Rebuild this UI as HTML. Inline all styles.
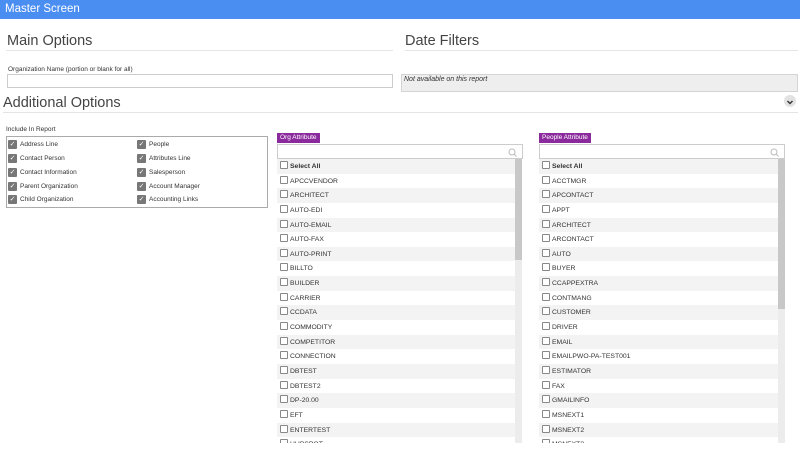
<!DOCTYPE html>
<html><head><style>
*{box-sizing:border-box;margin:0;padding:0}
body{width:800px;height:467px;background:#fff;font-family:"Liberation Sans",sans-serif;color:#333;position:relative;overflow:hidden}
.hdr{position:absolute;left:0;top:0;width:800px;height:19px;background:#4b8ef2;color:#fff;font-size:11.5px;line-height:19px;padding-left:5px}
.h{position:absolute;font-size:14.5px;color:#444}
.line{position:absolute;height:1px;background:#e4e4e4}
.lbl{position:absolute;font-size:6.5px;color:#333}
.inp{position:absolute;border:1px solid #ccc;background:#fff}
.box{position:absolute;left:6px;top:136px;width:262px;height:72px;border:1px solid #aaa}
.cb{position:absolute;font-size:6.5px;color:#333;line-height:9px}
.cb i{display:inline-block;width:9px;height:9px;background:#777;border-radius:1px;vertical-align:middle;margin-right:3px;color:#fff;font-style:normal;font-size:7px;line-height:9px;text-align:center}
.tag{position:absolute;background:#8b2a9c;color:#fff;font-size:6.5px;line-height:10px;height:10px;padding:0 3px}
.list{position:absolute;top:159px;height:284px;overflow:hidden}
.row{height:14.65px;font-size:6.8px;line-height:16px;padding-left:3px;color:#333}
.row:nth-child(odd){background:#f3f3f3}
.row b{display:inline-block;width:8px;height:8px;border:1px solid #888;border-radius:1px;vertical-align:-1px;margin-right:2px;background:#fff}
.sb{position:absolute;top:159px;width:7px;height:284px;background:#ececec}
.th{position:absolute;left:0;top:0;width:7px;background:#c8c8c8}
.srch{position:absolute}
</style></head><body>
<div class="hdr">Master Screen</div>
<div class="h" style="left:7px;top:33px">Main Options</div>
<div class="line" style="left:6px;top:50px;width:387px"></div>
<div class="h" style="left:405px;top:33px">Date Filters</div>
<div class="line" style="left:405px;top:50px;width:393px"></div>
<div class="lbl" style="left:8px;top:66px">Organization Name (portion or blank for all)</div>
<div class="inp" style="left:7px;top:74px;width:386px;height:14px"></div>
<div style="position:absolute;left:401px;top:74px;width:397px;height:18px;background:#eee;border:1px solid #d4d4d4;font-size:7px;font-style:italic;padding:1px 2px;color:#333">Not available on this report</div>
<div class="h" style="left:3px;top:95px">Additional Options</div>
<div style="position:absolute;left:784px;top:95px;width:12px;height:12px;border-radius:6px;background:#e2e2e2"><svg width="12" height="12"><path d="M3.5 5 L6 7.5 L8.5 5" stroke="#333" stroke-width="1.4" fill="none"/></svg></div>
<div class="line" style="left:3px;top:112px;width:795px"></div>
<div class="lbl" style="left:6px;top:126px">Include In Report</div>
<div class="box"></div>
<div class="cb" style="left:8px;top:140px"><i>✓</i>Address Line</div>
<div class="cb" style="left:8px;top:154px"><i>✓</i>Contact Person</div>
<div class="cb" style="left:8px;top:168px"><i>✓</i>Contact Information</div>
<div class="cb" style="left:8px;top:182px"><i>✓</i>Parent Organization</div>
<div class="cb" style="left:8px;top:195px"><i>✓</i>Child Organization</div>
<div class="cb" style="left:137px;top:140px"><i>✓</i>People</div>
<div class="cb" style="left:137px;top:154px"><i>✓</i>Attributes Line</div>
<div class="cb" style="left:137px;top:168px"><i>✓</i>Salesperson</div>
<div class="cb" style="left:137px;top:182px"><i>✓</i>Account Manager</div>
<div class="cb" style="left:137px;top:195px"><i>✓</i>Accounting Links</div>

<div class="tag" style="left:277px;top:133px">Org Attribute</div>
<div class="inp" style="left:277px;top:144px;width:246px;height:15px"></div>
<svg class="srch" style="left:508px;top:148px" width="9" height="9"><circle cx="4" cy="4" r="3" stroke="#bbb" fill="none"/><path d="M6 6 L8.5 8.5" stroke="#bbb"/></svg>
<div class="list" style="left:277px;width:238px">
<div class="row" style="font-weight:bold"><b></b>Select All</div>
<div class="row"><b></b>APCCVENDOR</div><div class="row"><b></b>ARCHITECT</div><div class="row"><b></b>AUTO-EDI</div><div class="row"><b></b>AUTO-EMAIL</div><div class="row"><b></b>AUTO-FAX</div><div class="row"><b></b>AUTO-PRINT</div><div class="row"><b></b>BILLTO</div><div class="row"><b></b>BUILDER</div><div class="row"><b></b>CARRIER</div><div class="row"><b></b>CCDATA</div><div class="row"><b></b>COMMODITY</div><div class="row"><b></b>COMPETITOR</div><div class="row"><b></b>CONNECTION</div><div class="row"><b></b>DBTEST</div><div class="row"><b></b>DBTEST2</div><div class="row"><b></b>DP-20.00</div><div class="row"><b></b>EFT</div><div class="row"><b></b>ENTERTEST</div><div class="row"><b></b>HUBSPOT</div>
</div>
<div class="sb" style="left:515px"><div class="th" style="height:101px"></div></div>

<div class="tag" style="left:539px;top:133px">People Attribute</div>
<div class="inp" style="left:539px;top:144px;width:246px;height:15px"></div>
<svg class="srch" style="left:770px;top:148px" width="9" height="9"><circle cx="4" cy="4" r="3" stroke="#bbb" fill="none"/><path d="M6 6 L8.5 8.5" stroke="#bbb"/></svg>
<div class="list" style="left:539px;width:239px">
<div class="row" style="font-weight:bold"><b></b>Select All</div>
<div class="row"><b></b>ACCTMGR</div><div class="row"><b></b>APCONTACT</div><div class="row"><b></b>APPT</div><div class="row"><b></b>ARCHITECT</div><div class="row"><b></b>ARCONTACT</div><div class="row"><b></b>AUTO</div><div class="row"><b></b>BUYER</div><div class="row"><b></b>CCAPPEXTRA</div><div class="row"><b></b>CONTMANG</div><div class="row"><b></b>CUSTOMER</div><div class="row"><b></b>DRIVER</div><div class="row"><b></b>EMAIL</div><div class="row"><b></b>EMAILPWO-PA-TEST001</div><div class="row"><b></b>ESTIMATOR</div><div class="row"><b></b>FAX</div><div class="row"><b></b>GMAILINFO</div><div class="row"><b></b>MSNEXT1</div><div class="row"><b></b>MSNEXT2</div><div class="row"><b></b>MSNEXT3</div>
</div>
<div class="sb" style="left:778px"><div class="th" style="height:150px"></div></div>
</body></html>
